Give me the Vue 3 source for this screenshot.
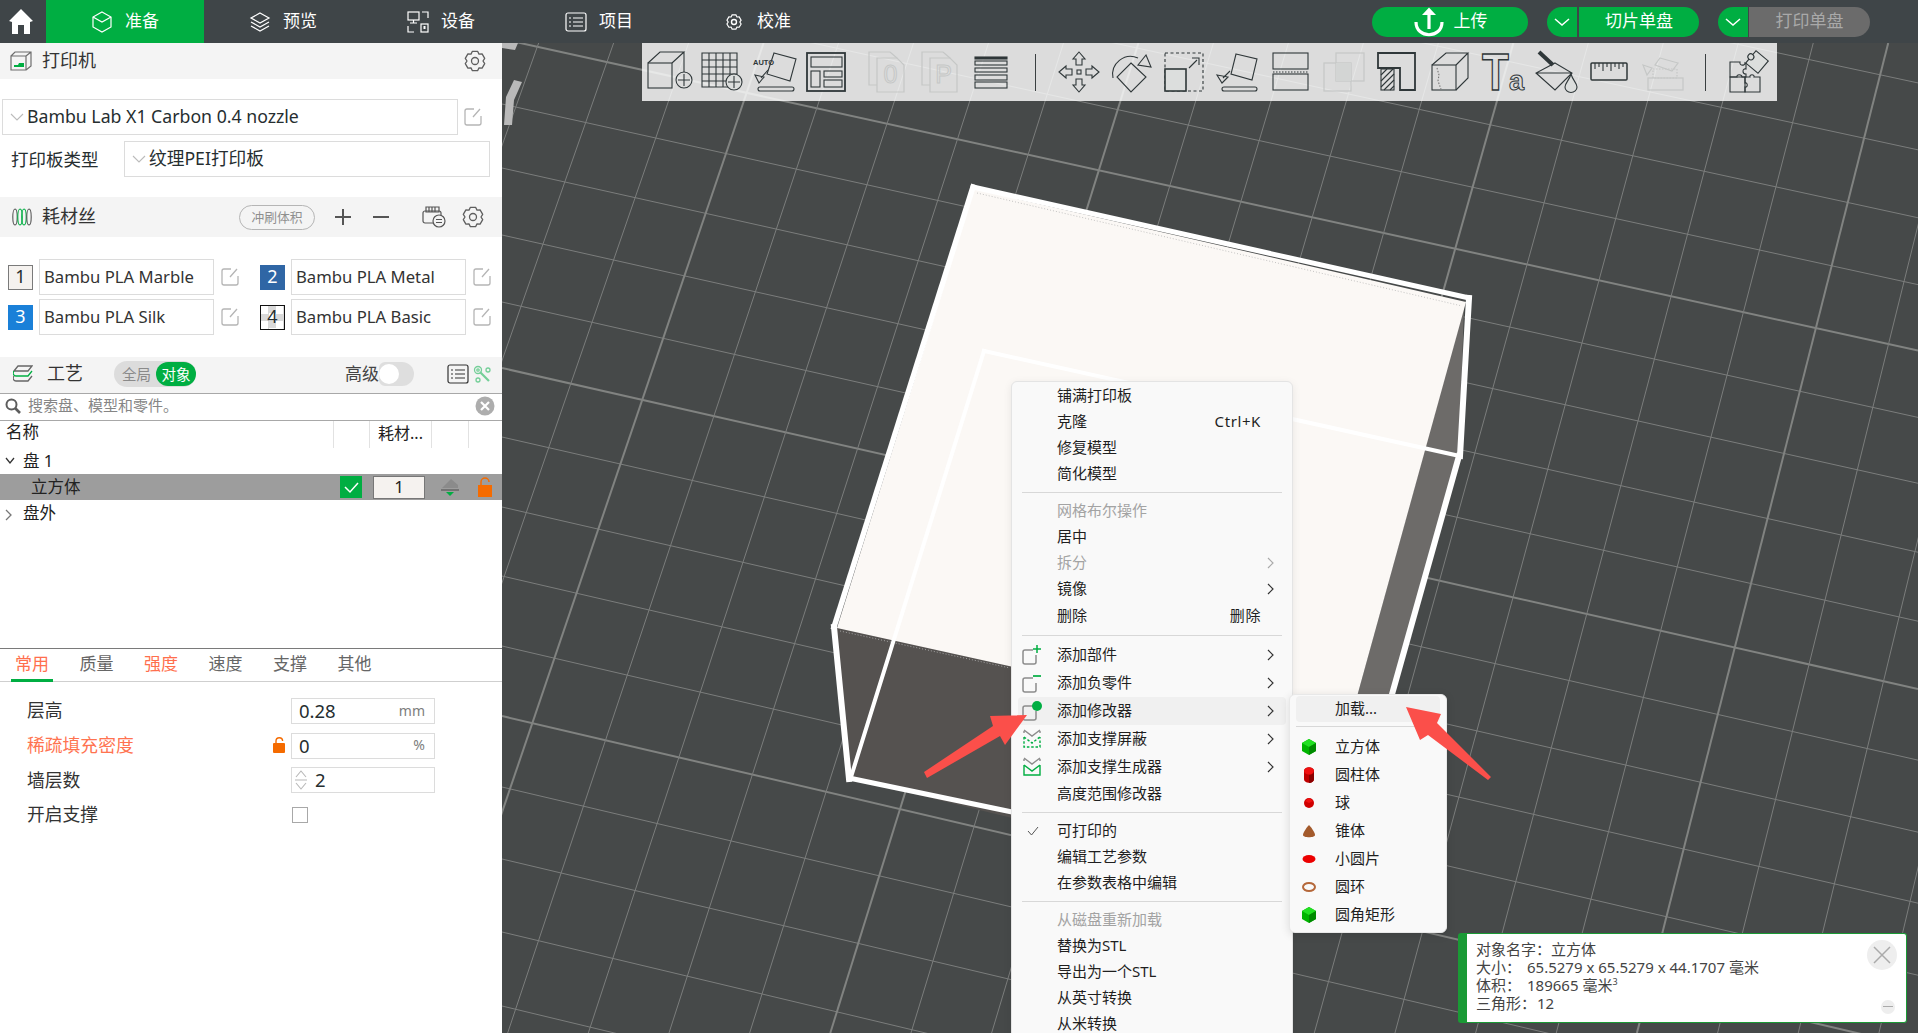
<script setup>
import { computed } from "vue"

const mainTabs = [
  { name: "准备", icon: "cube", active: true },
  { name: "预览", icon: "layers" },
  { name: "设备", icon: "device" },
  { name: "项目", icon: "list" },
  { name: "校准", icon: "gear" }
]

const filaments = [
  { no: 1, name: "Bambu PLA Marble", cls: "sw-marble" },
  { no: 2, name: "Bambu PLA Metal", cls: "sw-metal" },
  { no: 3, name: "Bambu PLA Silk", cls: "sw-silk" },
  { no: 4, name: "Bambu PLA Basic", cls: "sw-basic" }
]

const paramTabs = [
  { name: "常用", on: true, warn: true },
  { name: "质量" },
  { name: "强度", warn: true },
  { name: "速度" },
  { name: "支撑" },
  { name: "其他" }
]

const menu = [
  { t: "铺满打印板" },
  { t: "克隆", key: "Ctrl+K" },
  { t: "修复模型" },
  { t: "简化模型" },
  { sep: true },
  { t: "网格布尔操作", off: true },
  { t: "居中" },
  { t: "拆分", off: true, arrow: true },
  { t: "镜像", arrow: true },
  { t: "删除", key: "删除", tall: true },
  { sep: true },
  { t: "添加部件", arrow: true, tall: true, icon: "plus" },
  { t: "添加负零件", arrow: true, tall: true, icon: "minus" },
  { t: "添加修改器", arrow: true, tall: true, icon: "dot", hover: true },
  { t: "添加支撑屏蔽", arrow: true, tall: true, icon: "block" },
  { t: "添加支撑生成器", arrow: true, tall: true, icon: "enforce" },
  { t: "高度范围修改器" },
  { sep: true },
  { t: "可打印的", icon: "check" },
  { t: "编辑工艺参数" },
  { t: "在参数表格中编辑" },
  { sep: true },
  { t: "从磁盘重新加载", off: true },
  { t: "替换为STL" },
  { t: "导出为一个STL" },
  { t: "从英寸转换" },
  { t: "从米转换" }
]

const shapes = [
  { t: "立方体", top: "#22e022", a: "#00b400", b: "#008a00", kind: "hex" },
  { t: "圆柱体", top: "#f01010", a: "#c00000", b: "#8a0000", kind: "cyl" },
  { t: "球", top: "#f01010", a: "#d00000", b: "#a00000", kind: "ball" },
  { t: "锥体", kind: "cone" },
  { t: "小圆片", kind: "disc" },
  { t: "圆环", kind: "ring" },
  { t: "圆角矩形", top: "#22e022", a: "#00b400", b: "#008a00", kind: "hex" }
]

// 平台网格：两组带一点透视的线
const hLines = computed(() =>
  [-286, -221, -156, -90, -25, 39, 104, 168, 235, 302, 368, 437, 507, 576, 646, 716, 787, 859, 932, 1006, 1082].map((y0, i) => {
    const s = 0.22 + 0.0000206 * (y0 - 39)
    return { x1: 502, y1: y0, x2: 1918, y2: y0 + s * 1416, major: i % 5 === 0 }
  })
)

const vLines = computed(() => {
  const out = []
  for (let n = -3; n <= 20; n++) {
    const x = 632 + 77.2 * n
    const s = -0.34 + 0.0000744 * (x - 632)
    out.push({ x1: x + s * (43 - 430), y1: 43, x2: x + s * (1033 - 430), y2: 1033, major: n % 5 === 0 })
  }
  return out
})

function gear(c, R, r) {
  let d = ""
  for (let i = 0; i < 6; i++) {
    const a = (i * 60 - 90) * Math.PI / 180
    const p = [[-0.26, R], [0.26, R], [0.52, r]]
    p.forEach(([o, l], j) => {
      const x = (c + Math.cos(a + o) * l).toFixed(1)
      const y = (c + Math.sin(a + o) * l).toFixed(1)
      d += (i === 0 && j === 0 ? "M" : "L") + x + " " + y
    })
  }
  return d + "Z"
}
const gearPath = gear(11, 10, 8)
</script>

<template>
  <div class="app">
    <header class="topbar">
      <svg class="home" viewBox="0 0 24 25" width="24" height="25">
        <path d="M12 0 L24 12 L21 13 V25 H15 V16 H9 V25 H3 V13 L0 12 Z" fill="#fff" />
      </svg>
      <nav class="tabs">
        <div v-for="tab in mainTabs" :key="tab.name" class="tab" :class="{ active: tab.active }">
          <svg viewBox="0 0 22 22" width="22" height="22" fill="none" stroke="#fff" stroke-width="1.2">
            <g v-if="tab.icon === 'cube'">
              <path d="M11 1 L20 6 V16 L11 21 L2 16 V6 Z" />
              <path d="M2 6 L11 11 L20 6" />
            </g>
            <g v-else-if="tab.icon === 'layers'">
              <path d="M11 2 L20 7 L11 12 L2 7 Z" />
              <path d="M2 11 L11 16 L20 11" />
              <path d="M2 15 L11 20 L20 15" />
            </g>
            <g v-else-if="tab.icon === 'device'">
              <rect x="1" y="1" width="11" height="8" />
              <path d="M6.500 9 V12 M3 12 H10" />
              <path d="M15 1 H21 V7 M1 15 V21 H7" />
              <rect x="14" y="13" width="7" height="8" />
              <rect x="16.500" y="15" width="2" height="3" fill="#fff" stroke="none" />
            </g>
            <g v-else-if="tab.icon === 'list'">
              <rect x="1" y="2" width="20" height="18" rx="2" />
              <path d="M4 7 H6 M8 7 H18 M4 11 H6 M8 11 H18 M4 15 H6 M8 15 H18" />
            </g>
            <g v-else>
              <path :d="gearPath" stroke-width="1.600" transform="translate(3 3) scale(0.73)" />
              <circle cx="11" cy="11" r="2.500" stroke-width="1.400" />
            </g>
          </svg>
          <span>{{ tab.name }}</span>
        </div>
      </nav>
      <div class="actions">
        <button class="btn upload">
          <svg viewBox="0 0 32 30" width="32" height="30" fill="none" stroke="#fff" stroke-width="3.200">
            <path d="M16 22 V4" />
            <path d="M16 0.500 L23 8 H9 Z" fill="#fff" stroke="none" />
            <path d="M3 15 C3 32 29 32 29 15" />
          </svg>
          <span>上传</span>
        </button>
        <div class="split">
          <button class="drop"><svg viewBox="0 0 16 10" width="16" height="10"><path d="M1 2 L8 8 L15 2" fill="none" stroke="#fff" stroke-width="1.500" /></svg></button>
          <button class="main-btn">切片单盘</button>
        </div>
        <div class="split print">
          <button class="drop"><svg viewBox="0 0 16 10" width="16" height="10"><path d="M1 2 L8 8 L15 2" fill="none" stroke="#fff" stroke-width="1.500" /></svg></button>
          <button class="main-btn">打印单盘</button>
        </div>
      </div>
    </header>

    <div class="body">
      <aside class="panel">
        <div class="sec sec-printer">
          <svg class="sec-ic" viewBox="0 0 22 20" width="22" height="20" fill="none" stroke="#6d6d6d" stroke-width="1.200">
            <path d="M1 5 H16 V19 H1 Z M1 5 L5 1 H21 V15 L16 19 M16 5 L21 1" />
            <path d="M4 16 H14 V12 H9 L8 14 H4 Z" fill="#00ae42" stroke="none" />
          </svg>
          <span class="sec-title">打印机</span>
          <svg class="gear" viewBox="0 0 22 22" width="22" height="22" fill="none" stroke="#5e5e5e" stroke-width="1.300" stroke-linejoin="round">
            <path :d="gearPath" /><circle cx="11" cy="11" r="3.500" />
          </svg>
        </div>

        <div class="printer-row">
          <div class="combo combo-printer">
            <svg class="chev" viewBox="0 0 14 8" width="14" height="8"><path d="M1 1 L7 7 L13 1" fill="none" stroke="#bbb" stroke-width="1.100" /></svg>
            <span>Bambu Lab X1 Carbon 0.4 nozzle</span>
          </div>
          <svg class="edit" viewBox="0 0 18 18" width="18" height="18" fill="none" stroke="#b5b5b5" stroke-width="1.300">
            <path d="M10 1 H3 a2 2 0 0 0 -2 2 V15 a2 2 0 0 0 2 2 H15 a2 2 0 0 0 2 -2 V8 M9 9 L16 1" />
          </svg>
        </div>
        <div class="plate-row">
          <label>打印板类型</label>
          <div class="combo combo-plate">
            <svg class="chev" viewBox="0 0 14 8" width="14" height="8"><path d="M1 1 L7 7 L13 1" fill="none" stroke="#bbb" stroke-width="1.100" /></svg>
            <span>纹理PEI打印板</span>
          </div>
        </div>

        <div class="sec sec-fil">
          <svg class="sec-ic" viewBox="0 0 20 18" width="20" height="18" fill="none" stroke-width="1.100">
            <ellipse cx="3" cy="9" rx="2.200" ry="8" stroke="#555" />
            <ellipse cx="8" cy="9" rx="2.200" ry="8" stroke="#00ae42" />
            <ellipse cx="12" cy="9" rx="2.200" ry="8" stroke="#00ae42" />
            <ellipse cx="17" cy="9" rx="2.200" ry="8" stroke="#555" />
          </svg>
          <span class="sec-title">耗材丝</span>
          <span class="flush">冲刷体积</span>
          <span class="sym plus"></span>
          <span class="sym minus"></span>
          <svg class="ams" viewBox="0 0 24 22" width="24" height="22" fill="none" stroke="#555" stroke-width="1.200">
            <rect x="1" y="5" width="18" height="12" rx="2" />
            <path d="M4 1 H17 V6 H4 Z M7 1 V6 M10 1 V6 M13 1 V6" />
            <circle cx="17" cy="15" r="6" fill="#f3f3f3" />
            <path d="M14 13.500 H20 M14 16.500 H20" />
          </svg>
          <svg class="gear gear-2" viewBox="0 0 22 22" width="22" height="22" fill="none" stroke="#5e5e5e" stroke-width="1.300" stroke-linejoin="round">
            <path :d="gearPath" /><circle cx="11" cy="11" r="3.500" />
          </svg>
        </div>

        <div class="fil-grid">
          <div v-for="f in filaments" :key="f.no" class="fil">
            <span class="swatch" :class="f.cls">{{ f.no }}</span>
            <div class="fil-name">{{ f.name }}</div>
            <svg class="fil-edit" viewBox="0 0 18 18" width="18" height="18" fill="none" stroke="#b5b5b5" stroke-width="1.300">
              <path d="M10 1 H3 a2 2 0 0 0 -2 2 V15 a2 2 0 0 0 2 2 H15 a2 2 0 0 0 2 -2 V8 M9 9 L16 1" />
            </svg>
          </div>
        </div>

        <div class="sec sec-proc">
          <svg class="sec-ic" viewBox="0 0 20 18" width="20" height="18" fill="none" stroke-width="1.300">
            <path d="M1 6 L5 1 H19 L15 6 H1 Z" stroke="#666" />
            <path d="M1 6 C-1 9 1 11 3 11 H15 L19 6" stroke="#00ae42" />
            <path d="M1 11 C-1 14 1 16 3 16 H15 L19 11" stroke="#666" />
          </svg>
          <span class="sec-title">工艺</span>
          <div class="scope">
            <span class="scope-a">全局</span>
            <span class="scope-b">对象</span>
          </div>
          <span class="adv">高级</span>
          <div class="switch"><i></i></div>
          <svg class="list-ic" viewBox="0 0 22 20" width="22" height="20" fill="none" stroke="#333" stroke-width="1.200">
            <rect x="1" y="1" width="20" height="18" rx="2" />
            <path d="M4 6 H6 M8 6 H18 M4 10 H6 M8 10 H18 M4 14 H6 M8 14 H18" />
          </svg>
          <svg class="tool-ic" viewBox="0 0 18 18" width="18" height="18" fill="none" stroke="#74cf98" stroke-width="1.300">
            <circle cx="5" cy="5" r="3.500" /><circle cx="5" cy="5" r="1.200" />
            <circle cx="15" cy="5" r="2" /><circle cx="5" cy="15" r="2" />
            <path d="M7 7 L16 16" stroke-width="2.200" />
          </svg>
        </div>

        <div class="search">
          <svg viewBox="0 0 16 16" width="16" height="16" fill="none" stroke="#5d5d5d" stroke-width="2">
            <circle cx="6.500" cy="6.500" r="5" /><path d="M10 10 L15 15" stroke-width="2.600" />
          </svg>
          <span class="ph">搜索盘、模型和零件。</span>
          <svg class="clear" viewBox="0 0 20 20" width="20" height="20">
            <circle cx="10" cy="10" r="9.500" fill="#adadad" />
            <path d="M6 6 L14 14 M14 6 L6 14" stroke="#fff" stroke-width="2.200" />
          </svg>
        </div>

        <div class="tree">
          <div class="thead">
            <span class="th-name">名称</span>
            <span class="th th-a"></span>
            <span class="th th-b">耗材...</span>
            <span class="th th-c"></span>
            <span class="th th-d"></span>
          </div>
          <div class="node">
            <svg class="twist" viewBox="0 0 10 8" width="10" height="8"><path d="M1 1 L5 6 L9 1" fill="none" stroke="#333" stroke-width="1.300" /></svg>
            <span>盘 1</span>
          </div>
          <div class="node leaf">
            <span class="leaf-name">立方体</span>
            <span class="ok"><svg viewBox="0 0 22 22" width="22" height="22"><path d="M5 11 L10 16 L18 7" fill="none" stroke="#fff" stroke-width="1.500" /></svg></span>
            <span class="count">1</span>
            <svg class="support" viewBox="0 0 20 20" width="20" height="20">
              <path d="M2 11 L11 2 L18 8 V11 Z" fill="#8b8b8b" />
              <rect x="1" y="12" width="18" height="2" fill="#737373" />
              <path d="M6 15 H14 L10 19 Z" fill="#00ae42" />
            </svg>
            <svg class="lock-ic" viewBox="0 0 14 20" width="14" height="20">
              <path d="M3 9 V5 a4 4 0 0 1 8 0" fill="none" stroke="#f56b00" stroke-width="1.500" />
              <rect y="8" width="14" height="12" fill="#f56b00" />
            </svg>
          </div>
          <div class="node">
            <svg class="twist" viewBox="0 0 8 12" width="8" height="12"><path d="M1 1 L6 6 L1 11" fill="none" stroke="#777" stroke-width="1.300" /></svg>
            <span>盘外</span>
          </div>
        </div>

        <div class="ptabs">
          <span v-for="p in paramTabs" :key="p.name" class="ptab" :class="{ on: p.on, warn: p.warn }">{{ p.name }}</span>
        </div>

        <div class="params">
          <div class="param">
            <span class="plabel">层高</span>
            <div class="pinput"><span>0.28</span><em>mm</em></div>
          </div>
          <div class="param">
            <span class="plabel warn">稀疏填充密度</span>
            <svg class="plock" viewBox="0 0 13 16" width="13" height="16">
              <path d="M3 7 V4 a3.300 3.300 0 0 1 6.600 0" fill="none" stroke="#f56b00" stroke-width="1.400" />
              <rect y="6" width="12" height="10" rx="1" fill="#f56b00" />
            </svg>
            <div class="pinput"><span>0</span><em>%</em></div>
          </div>
          <div class="param">
            <span class="plabel">墙层数</span>
            <div class="pinput spin">
              <svg viewBox="0 0 12 24" width="12" height="24" fill="none" stroke="#b8b8b8" stroke-width="1.100">
                <path d="M1 9 L6 3 L11 9 M1 15 L6 21 L11 15 M0 12 H12" />
              </svg>
              <span>2</span>
            </div>
          </div>
          <div class="param">
            <span class="plabel">开启支撑</span>
            <span class="pcheck"></span>
          </div>
        </div>
      </aside>

      <main class="view">
        <svg class="scene" viewBox="502 43 1416 990" width="1416" height="990">
          <line v-for="(l, i) in hLines" :key="'h' + i" v-bind="{ x1: l.x1, y1: l.y1, x2: l.x2, y2: l.y2 }" :stroke="l.major ? '#818381' : '#7b7d7c'" :stroke-width="l.major ? 2 : 1" />
          <line v-for="(l, i) in vLines" :key="'v' + i" v-bind="{ x1: l.x1, y1: l.y1, x2: l.x2, y2: l.y2 }" :stroke="l.major ? '#818381' : '#7b7d7c'" :stroke-width="l.major ? 2 : 1" />
          <path d="M502 43 H518 L515 50 L502 48 Z M514 80 L522 82 L514 100 L512 125 L504 125 L506 97 Z" fill="#b9b9b9" />

          <polygon points="836,627 849,778 1335,897 1345,740" fill="#555250" />
          <polygon points="1464,307 1459,455 1335,897 1345,740" fill="#6d6b69" />
          <polygon points="974,189 1466,302 1345,740 837,628" fill="#fbf8f5" />
          <path d="M977 193 L1462 306 M840 631 L1010 668" stroke="#b5b5b5" stroke-width="0.800" stroke-dasharray="1 2" fill="none" />
          <g stroke="#fff" fill="none" stroke-linecap="square">
            <path d="M973 187 L1469 298" stroke-width="5" />
            <path d="M973 187 L834 627" stroke-width="5.500" />
            <path d="M1469 298 L1460 456" stroke-width="6" />
            <path d="M834 627 L849 779" stroke-width="6" />
            <path d="M849 778 L1012 812" stroke-width="5" />
            <path d="M984 351 L851 777" stroke-width="4" />
            <path d="M984 351 L1460 456" stroke-width="4" />
            <path d="M1459 456 L1335 897" stroke-width="6" />
          </g>
        </svg>

        <div class="toolbar">
          <svg class="tb" viewBox="0 0 48 42">
            <rect x="3" y="12" width="24" height="25" />
            <path d="M3 12 L15 1 H39 L27 12 M39 1 V21" />
            <circle cx="39" cy="29" r="8" />
            <path d="M33 29 H45 M39 23 V35" />
          </svg>
          <svg class="tb" viewBox="0 0 48 42">
            <path d="M4 2 H39 V36 H4 Z M4 9 H39 M4 16 H39 M4 23 H39 M4 30 H39 M11 2 V36 M18 2 V36 M25 2 V36 M32 2 V36" />
            <circle cx="36" cy="31" r="8" fill="#dcdedd" />
            <path d="M30 31 H42 M36 25 V37" />
          </svg>
          <svg class="tb" viewBox="0 0 48 42">
            <path d="M23 2 L45 8 L39 30 L16 23 Z" />
            <path d="M4 24 L13 26 L8 32 Z M10 27 L17 19" />
            <rect x="7" y="36" width="36" height="4" rx="2" />
            <text x="2" y="14" class="auto">AUTO</text>
          </svg>
          <svg class="tb" viewBox="0 0 48 42">
            <rect x="3" y="2" width="38" height="38" stroke-width="1.800" />
            <rect x="7" y="6" width="31" height="10" />
            <rect x="7" y="20" width="9" height="16" />
            <rect x="20" y="20" width="18" height="6" />
            <rect x="20" y="29" width="18" height="7" />
          </svg>
          <svg class="tb faint gap-l" viewBox="0 0 48 42">
            <path d="M14 34 H6 V1 H27 L34 7 V7" />
            <path d="M14 7 H34 L41 14 V41 H14 Z" />
            <text x="27.500" y="32" class="doc">0</text>
          </svg>
          <svg class="tb faint" viewBox="0 0 48 42">
            <path d="M14 34 H6 V1 H27 L34 7 V7" />
            <path d="M14 7 H34 L41 14 V41 H14 Z" />
            <text x="27.500" y="32" class="doc">P</text>
          </svg>
          <svg class="tb" viewBox="0 0 48 42">
            <rect x="6" y="6" width="32" height="2" fill="#2f3739" />
            <rect x="6" y="10" width="32" height="4" />
            <rect x="6" y="17" width="32" height="4" />
            <rect x="6" y="24" width="32" height="5" />
            <rect x="6" y="31" width="32" height="6" />
          </svg>
          <i class="tb-sep sep-a"></i>
          <svg class="tb after-sep-a" viewBox="0 0 48 42">
            <rect x="22" y="19" width="4" height="4" />
            <path d="M24 1 L30 8 H27 V14 H21 V8 H18 Z" />
            <path d="M24 1 L30 8 H27 V14 H21 V8 H18 Z" transform="rotate(90 24 21)" />
            <path d="M24 1 L30 8 H27 V14 H21 V8 H18 Z" transform="rotate(180 24 21)" />
            <path d="M24 1 L30 8 H27 V14 H21 V8 H18 Z" transform="rotate(270 24 21)" />
          </svg>
          <svg class="tb" viewBox="0 0 48 42">
            <path d="M23 12 L38 26 L23 41 L9 26 Z" />
            <path d="M5 27 A18 18 0 0 1 30 7" />
            <path d="M38 4 L43 16 L30 14 Z" />
          </svg>
          <svg class="tb" viewBox="0 0 48 42">
            <rect x="4" y="2" width="38" height="38" stroke-dasharray="3 2.500" />
            <rect x="4" y="18" width="21" height="22" fill="#dcdedd" stroke-width="1.600" />
            <path d="M28 17 L36 9 M31 7 H38 V14" />
          </svg>
          <svg class="tb" viewBox="0 0 48 42">
            <path d="M22 3 L43 8 L38 29 L17 23 Z" />
            <path d="M3 24 L14 26 L8 32 Z M9 27 L16 20" />
            <rect x="8" y="36" width="35" height="4" rx="2" />
          </svg>
          <svg class="tb" viewBox="0 0 48 42">
            <rect x="6" y="2" width="35" height="16" />
            <path d="M6 21 H41" stroke-dasharray="1.500 1.500" />
            <rect x="6" y="23" width="35" height="16" />
          </svg>
          <svg class="tb faint" viewBox="0 0 48 42">
            <rect x="16" y="2" width="28" height="28" />
            <rect x="4" y="12" width="27" height="28" />
            <rect x="16" y="12" width="15" height="18" fill="#d3d5d4" stroke="none" />
          </svg>
          <svg class="tb" viewBox="0 0 48 42">
            <path d="M5 2 H42 V39 H27 V17 H5 Z" stroke-width="1.800" />
            <rect x="8" y="18" width="13" height="21" />
            <path d="M8 24 L14 18 M8 30 L20 18 M8 36 L21 23 M11 39 L21 29 M17 39 L21 35" />
          </svg>
          <svg class="tb" viewBox="0 0 48 42">
            <rect x="6" y="14" width="24" height="25" />
            <path d="M6 14 L20 2 H42 L30 14 M42 2 V27 L30 39" />
            <path d="M11 17 L13 24 L12 30 L15 38" stroke="#777" stroke-dasharray="1.500 1.500" />
          </svg>
          <svg class="tb" viewBox="0 0 48 42">
            <text class="big-t" transform="translate(3 39) scale(1 1.180)">T</text>
            <text x="30" y="39" class="small-a">a</text>
          </svg>
          <svg class="tb" viewBox="0 0 48 42">
            <path d="M23 12 L40 22 L23 39 L4 22 Z M4 22 H40" />
            <path d="M7 1 L21 14" stroke-width="4" />
            <path d="M39 23 C37 30 33 32 33 36 A6 5.500 0 0 0 45 36 C45 32 41 30 39 23 Z" fill="#dcdedd" />
          </svg>
          <svg class="tb" viewBox="0 0 48 42">
            <rect x="6" y="12" width="36" height="17" rx="1" stroke-width="1.500" />
            <path d="M10 12 V18 M14 12 V16 M18 12 V20 M22 12 V16 M26 12 V20 M30 12 V16 M34 12 V18 M38 12 V16" />
          </svg>
          <svg class="tb faint" viewBox="0 0 48 42">
            <path d="M22 7 L40 12 L34 20 L17 14 Z" />
            <path d="M5 14 L14 17 L9 24 Z" />
            <rect x="15" y="18" width="24" height="9" stroke-dasharray="1.500 1.500" />
            <rect x="10" y="27" width="35" height="12" />
          </svg>
          <i class="tb-sep sep-b"></i>
          <svg class="tb after-sep-b" viewBox="0 0 48 42">
            <path d="M6 11 H16 C15 15 21 15 21 12 L22 13 V18 C18 17 18 23 22 23 V26 H6 Z" />
            <path d="M6 26 H13 C12 23 18 23 18 26 H21 V41 H6 Z" />
            <path d="M21 26 H26 C25 23 31 23 30 26 H36 V41 H21 V36 C24 37 24 31 21 32 Z" />
            <g transform="rotate(40 33 11)">
              <rect x="25" y="3" width="16" height="16" fill="#dcdedd" />
              <circle cx="25" cy="11" r="3" fill="#dcdedd" />
            </g>
          </svg>
        </div>

        <div class="ctx">
          <template v-for="(m, i) in menu" :key="i">
            <div v-if="m.sep" class="ctx-sep"><i></i></div>
            <div v-else class="ctx-row" :class="{ tall: m.tall, off: m.off, hover: m.hover }">
              <span class="ctx-ic">
                <svg v-if="m.icon === 'plus' || m.icon === 'minus' || m.icon === 'dot'" viewBox="0 0 20 20" width="20" height="20" fill="none" stroke="#8c8c8c" stroke-width="1.500">
                  <path d="M11 5 H3 a2 2 0 0 0 -2 2 V17 a2 2 0 0 0 2 2 H12 a2 2 0 0 0 2 -2 V10" />
                  <path v-if="m.icon === 'plus'" d="M15 0 V8 M11 4 H19" stroke="#00ae42" />
                  <path v-if="m.icon === 'minus'" d="M11 3 H19" stroke="#00ae42" stroke-width="1.700" />
                  <circle v-if="m.icon === 'dot'" cx="15" cy="5" r="5" fill="#00ae42" stroke="none" />
                </svg>
                <svg v-else-if="m.icon === 'block' || m.icon === 'enforce'" viewBox="0 0 20 20" width="20" height="20" fill="none" stroke-width="1.400">
                  <path d="M2 1 L10 7 L18 1 M2 4 L2 2 M18 4 L18 2" stroke="#8c8c8c" />
                  <path v-if="m.icon === 'block'" d="M2 8 L10 14 L18 8 M2 8 V18 H18 V8" stroke="#00ae42" stroke-dasharray="2.500 1.800" />
                  <path v-else d="M2 8 L10 14 L18 8 M2 8 V18 H18 V8" stroke="#00ae42" />
                </svg>
                <svg v-else-if="m.icon === 'check'" class="ctx-check" viewBox="0 0 12 10" width="12" height="10">
                  <path d="M1 5 L4.500 9 L11 1" fill="none" stroke="#555" stroke-width="1" />
                </svg>
              </span>
              <span class="ctx-text">{{ m.t }}</span>
              <span v-if="m.key" class="ctx-key">{{ m.key }}</span>
              <svg v-if="m.arrow" class="ctx-arrow" viewBox="0 0 7 12" width="7" height="12">
                <path d="M1 1 L6 6 L1 11" fill="none" :stroke="m.off ? '#aaa' : '#333'" stroke-width="1.200" />
              </svg>
            </div>
          </template>
        </div>

        <div class="sub">
          <div class="sub-load">加载...</div>
          <div class="sub-sep"></div>
          <div v-for="s in shapes" :key="s.t" class="sub-row">
            <svg viewBox="0 0 16 16" width="16" height="16">
              <g v-if="s.kind === 'hex'">
                <path d="M8 0 L15 4 V12 L8 16 L1 12 V4 Z" :fill="s.a" />
                <path d="M8 0 L15 4 L8 8 L1 4 Z" :fill="s.top" />
                <path d="M8 8 L15 4 V12 L8 16 Z" :fill="s.b" />
              </g>
              <g v-else-if="s.kind === 'cyl'">
                <path d="M3 4 C3 -1 13 -1 13 4 V12 C13 17 3 17 3 12 Z" :fill="s.a" />
                <ellipse cx="8" cy="4" rx="5" ry="3.500" :fill="s.top" />
                <path d="M8 8 C11 8 13 6 13 4 V12 C13 14 11 16 8 16 Z" :fill="s.b" />
              </g>
              <g v-else-if="s.kind === 'ball'">
                <circle cx="8" cy="8" r="5" fill="#d00000" />
                <path d="M4 6 L8 3 L12 6 L8 8 Z" fill="#f01010" />
              </g>
              <path v-else-if="s.kind === 'cone'" d="M8 2 C11 5 14 10 14 12 C14 15 2 15 2 12 C2 10 5 5 8 2 Z" fill="#a35a2c" />
              <ellipse v-else-if="s.kind === 'disc'" cx="8" cy="8" rx="6.500" ry="4" fill="#ec0000" />
              <ellipse v-else cx="8" cy="8" rx="6" ry="4" fill="none" stroke="#b5683a" stroke-width="2" />
            </svg>
            <span>{{ s.t }}</span>
          </div>
        </div>

        <svg class="marks" viewBox="502 43 1416 990" width="1416" height="990">
          <polygon points="1027,715 990,716 993,726 924,772 927,778 1000,736 1005,745" fill="#fb4f4a" />
          <polygon points="1406,707 1441,714 1437,723 1491,777 1488,780 1428,735 1420,740" fill="#fb4f4a" />
        </svg>

        <div class="info">
          <div class="info-text">
            <p>对象名字：<span class="v1">立方体</span></p>
            <p>大小：<span class="v2">65.5279 x 65.5279 x 44.1707 毫米</span></p>
            <p>体积：<span class="v2">189665 毫米<sup>3</sup></span></p>
            <p>三角形：<span class="v3">12</span></p>
          </div>
          <span class="info-close">
            <svg viewBox="0 0 20 20" width="20" height="20"><path d="M2 2 L18 18 M18 2 L2 18" stroke="#aaa" stroke-width="1.500" /></svg>
          </span>
          <span class="info-min"></span>
        </div>
      </main>
    </div>
  </div>
</template>

<style scoped>
.app{
  width:1918px;
  height:1033px;
  display:flex;
  flex-direction:column;
  overflow:hidden;
  font-family:"Noto Sans","Noto Sans CJK SC",sans-serif;
  line-height:1.3;
  color:#262e30;
}

button{
  font-family:inherit;
  line-height:inherit;
  border:none;
  padding:0;
}

.topbar{
  height:43px;
  flex:none;
  background:#3f4548;
  display:flex;
  align-items:center;
}

.home{
  margin-left:9px;
  margin-right:13px;
  flex:none;
}

.tabs{
  display:flex;
  height:100%;
}

.tab{
  width:158px;
  display:flex;
  align-items:center;
  justify-content:center;
  gap:12px;
  color:#fff;
  font-size:17px;
}

.tab.active{
  background:#00ae42;
}

.actions{
  margin-left:auto;
  margin-right:48px;
  display:flex;
  align-items:center;
  gap:19px;
}

.btn.upload{
  width:156px;
  height:30px;
  border-radius:15px;
  background:#00ae42;
  color:#fff;
  font-size:17px;
  display:flex;
  align-items:center;
  justify-content:center;
  gap:9px;
}

.split{
  display:flex;
  height:30px;
  border-radius:15px;
  overflow:hidden;
  gap:2px;
}

.drop{
  width:30px;
  background:#00ae42;
  display:flex;
  align-items:center;
  justify-content:center;
}

.main-btn{
  width:120px;
  background:#00ae42;
  color:#fff;
  font-size:17px;
}

.split.print{
  gap:1px;
}

.print .main-btn{
  width:121px;
  background:#6b6b6b;
  color:#a9a9a9;
}

.body{
  flex:1;
  display:flex;
  min-height:0;
}

.panel{
  width:502px;
  flex:none;
  background:#fff;
  display:flex;
  flex-direction:column;
}

.sec{
  background:#f4f4f4;
  display:flex;
  align-items:center;
  flex:none;
}

.sec-printer{
  height:36px;
  padding-left:10px;
  padding-bottom:1px;
  box-sizing:border-box;
}

.sec-fil{
  height:40px;
  margin-top:20px;
  padding-left:12px;
}

.sec-proc{
  height:34px;
  padding-bottom:2px;
  margin-top:22px;
  padding-left:13px;
  border-bottom:1px solid #a8a8a8;
  box-sizing:content-box;
}

.sec-title{
  flex:none;
  white-space:nowrap;
  font-size:18px;
  margin-left:10px;
  color:#333;
}

.sec-proc .sec-title{
  margin-left:14px;
}

.gear{
  margin-left:auto;
  margin-right:16px;
}

.gear-2{
  margin-left:16px;
  margin-right:0;
  flex:none;
}

.printer-row{
  display:flex;
  align-items:center;
  margin-top:20px;
  padding-left:2px;
  height:36px;
}

.combo{
  height:36px;
  box-sizing:border-box;
  border:1px solid #dcdcdc;
  display:flex;
  align-items:center;
  font-size:17.700px;
  color:#262e30;
  padding-bottom:1px;
}

.combo .chev{
  margin:0 3px 0 7px;
  flex:none;
}

.combo-printer{
  width:456px;
}

.edit{
  margin-left:6px;
}

.plate-row{
  display:flex;
  align-items:center;
  margin-top:6px;
  height:36px;
  padding-left:11px;
}

.plate-row label{
  width:113px;
  font-size:17.500px;
  color:#262e30;
}

.combo-plate{
  width:366px;
}

.fil-grid{
  display:grid;
  grid-template-columns:252px 242px;
  row-gap:4px;
  padding:22px 0 0 8px;
}

.fil{
  display:flex;
  align-items:center;
  height:36px;
}

.swatch{
  width:25px;
  height:25px;
  box-sizing:border-box;
  flex:none;
  display:flex;
  align-items:center;
  justify-content:center;
  font-size:18px;
}

.sw-marble{
  background:#f5f2ef;
  border:1px solid #7a7a7a;
}

.sw-metal{
  background:#2f66a5;
  color:#fff;
}

.sw-silk{
  background:#1a80d8;
  color:#fff;
}

.sw-basic{
  background:repeating-conic-gradient(#d9d9d9 0 25%,#fff 0 50%) 0 0/15px 15px;
  border:1px solid #111;
}

.fil-name{
  width:175px;
  height:36px;
  box-sizing:border-box;
  margin-left:6px;
  border:1px solid #dcdcdc;
  padding-left:4px;
  display:flex;
  align-items:center;
  font-size:16.700px;
  color:#333;
}

.fil-edit{
  margin-left:7px;
}

.flush{
  margin-left:143px;
  flex:none;
  width:76px;
  height:25px;
  box-sizing:border-box;
  border:1px solid #b5b5b5;
  border-radius:13px;
  font-size:12.800px;
  color:#8f8f8f;
  display:flex;
  align-items:center;
  justify-content:center;
}

.sym{
  width:16px;
  height:16px;
  position:relative;
  display:block;
  flex:none;
}

.sym::before,.plus::after{
  content:"";
  position:absolute;
  background:#555;
}

.sym::before{
  left:0;
  top:7px;
  width:16px;
  height:2px;
}

.plus::after{
  left:7px;
  top:0;
  width:2px;
  height:16px;
}

.plus{
  margin-left:20px;
}

.minus{
  margin-left:22px;
}

.ams{
  margin-left:33px;
  flex:none;
}

.scope{
  margin-left:31px;
  width:82px;
  height:26px;
  border-radius:13px;
  background:#dcdcdc;
  display:flex;
  align-items:center;
  font-size:14.500px;
}

.scope-a{
  width:37px;
  text-align:right;
  color:#8a8a8a;
}

.scope-b{
  margin-left:5px;
  width:40px;
  height:24px;
  border-radius:12px;
  background:#00ae42;
  color:#fff;
  display:flex;
  align-items:center;
  justify-content:center;
}

.adv{
  margin-left:auto;
  font-size:17px;
  color:#444;
}

.switch{
  width:35px;
  height:24px;
  margin-right:33px;
  border-radius:6px 12px 12px 6px;
  background:#dedede;
  position:relative;
}

.switch i{
  position:absolute;
  left:0;
  top:2px;
  width:20px;
  height:20px;
  border-radius:50%;
  background:#fff;
}

.list-ic{
  flex:none;
}

.tool-ic{
  margin:0 11px 0 4px;
  flex:none;
}

.search{
  height:24px;
  padding-bottom:2px;
  flex:none;
  border-bottom:1px solid #a8a8a8;
  display:flex;
  align-items:center;
  padding-left:5px;
  font-size:15px;
}

.ph{
  margin-left:7px;
  color:#858585;
}

.clear{
  margin-left:auto;
  margin-right:7px;
}

.tree{
  height:227px;
  flex:none;
  border-bottom:1px solid #7a7a7a;
  font-size:16.500px;
  color:#222;
}

.thead{
  height:27px;
  display:flex;
  align-items:center;
}

.th-name{
  width:333px;
  height:25px;
  padding-left:6px;
  box-sizing:border-box;
  align-self:flex-start;
}

.th{
  height:27px;
  border-left:1px solid #e2e2e2;
  box-sizing:border-box;
  display:flex;
  align-items:center;
  justify-content:center;
}

.th-a{
  width:36px;
}

.th-b{
  width:62px;
  font-size:16px;
  padding-bottom:2px;
}

.th-c{
  width:37px;
}

.th-d{
  width:34px;
}

.node{
  height:26px;
  display:flex;
  align-items:center;
  padding-left:23px;
  position:relative;
}

.twist{
  position:absolute;
  left:5px;
  top:9px;
}

.leaf{
  background:#9d9d9d;
  padding-left:31px;
}

.leaf-name{
  width:309px;
}

.ok{
  width:22px;
  height:22px;
  background:#00ae42;
  display:block;
  flex:none;
}

.count{
  margin-left:11px;
  width:52px;
  height:23px;
  box-sizing:border-box;
  flex:none;
  background:#f5f2ef;
  border:1px solid #777;
  display:flex;
  align-items:center;
  justify-content:center;
  font-size:17px;
}

.support{
  margin-left:15px;
}

.lock-ic{
  margin-left:18px;
}

.ptabs{
  height:31px;
  padding-bottom:1px;
  flex:none;
  border-bottom:1px solid #cfcfcf;
  display:flex;
  padding-left:15px;
  gap:30.500px;
  font-size:17px;
  color:#666;
  align-items:center;
  box-sizing:content-box;
}

.ptab{
  position:relative;
}

.ptab.warn{
  color:#ff6f4d;
}

.ptab.on::after{
  content:"";
  position:absolute;
  left:-4px;
  right:-4px;
  bottom:-6px;
  height:3px;
  background:#00ae42;
}

.params{
  padding-top:11.500px;
}

.param{
  height:34.700px;
  display:flex;
  align-items:center;
  padding-left:27px;
  position:relative;
  font-size:17.800px;
  color:#333;
}

.plabel{
  width:264px;
}

.plabel.warn{
  color:#ff7350;
}

.plock{
  position:absolute;
  left:273px;
  top:9px;
}

.pinput{
  width:144px;
  height:26px;
  box-sizing:border-box;
  border:1px solid #dcdcdc;
  display:flex;
  align-items:center;
  justify-content:space-between;
  padding:0 9px 0 7px;
  font-size:18.500px;
  color:#262e30;
}

.pinput em{
  font-style:normal;
  font-size:14px;
  color:#7d7d7d;
}

.pinput.spin{
  justify-content:flex-start;
  padding-left:3px;
  gap:8px;
}

.pcheck{
  margin-left:1px;
  width:16px;
  height:16px;
  box-sizing:border-box;
  border:1px solid #a8a8a8;
  background:#fff;
}

.view{
  flex:1;
  position:relative;
  overflow:hidden;
  background:#464949;
}

.scene{
  display:block;
}

.marks{
  position:absolute;
  left:0;
  top:0;
  pointer-events:none;
}

.toolbar{
  position:absolute;
  left:140px;
  top:0;
  width:1135px;
  height:58px;
  box-sizing:border-box;
  background:rgba(255,255,255,0.81);
  display:flex;
  align-items:center;
  gap:5px;
  padding-left:3px;
}

.tb{
  width:48px;
  height:42px;
  flex:none;
  fill:none;
  stroke:#2f3739;
  stroke-width:1.100;
  overflow:visible;
}

.tb.faint{
  stroke:#c5c7c6;
  stroke-width:1.200;
}

.gap-l{
  margin-left:6px;
}

.tb-sep{
  width:1px;
  height:37px;
  background:#3a3f41;
  flex:none;
}

.sep-a{
  margin-left:13px;
}

.after-sep-a{
  margin-left:14px;
}

.sep-b{
  margin-left:14px;
}

.after-sep-b{
  margin-left:13px;
}

.auto{
  font-family:"Liberation Sans",sans-serif;
  font-size:7.500px;
  font-weight:700;
  fill:#2f3739;
  stroke:none;
}

.doc{
  font-family:"Liberation Sans",sans-serif;
  font-size:25px;
  text-anchor:middle;
  fill:none;
  stroke:#c5c7c6;
  stroke-width:1;
}

.big-t{
  font-family:"Liberation Sans",sans-serif;
  font-size:44px;
  font-weight:700;
  fill:none;
  stroke:#2f3739;
  stroke-width:1.200;
}

.small-a{
  font-family:"Liberation Sans",sans-serif;
  font-size:27px;
  font-weight:700;
  fill:none;
  stroke:#2f3739;
  stroke-width:1;
}

.ctx{
  position:absolute;
  left:509px;
  top:338px;
  width:282px;
  height:700px;
  box-sizing:border-box;
  padding:1px 6px 0;
  background:#f9f9f9;
  border:1px solid #e4e4e4;
  border-radius:6px;
  box-shadow:0 2px 8px rgba(0,0,0,0.08);
  font-size:15px;
  color:#1f1f1f;
}

.ctx-row{
  height:26px;
  display:flex;
  align-items:center;
  border-radius:4px;
  padding-right:13px;
}

.ctx-row.tall{
  height:28px;
}

.ctx-row.off{
  color:#a3a3a3;
}

.ctx-row.hover{
  background:#f0f0f0;
}

.ctx-ic{
  width:39px;
  padding-left:4px;
  box-sizing:border-box;
  flex:none;
  display:flex;
  align-items:center;
}

.ctx-check{
  margin-left:5px;
}

.ctx-key{
  margin-left:auto;
  margin-right:12px;
  letter-spacing:0.600px;
}

.ctx-arrow{
  margin-left:auto;
  margin-right:-1px;
}

.ctx-sep{
  height:11px;
  display:flex;
  align-items:center;
  padding:0 4px;
}

.ctx-sep i{
  display:block;
  width:100%;
  height:1px;
  background:#d8d8d8;
}

.sub{
  position:absolute;
  left:787px;
  top:651px;
  width:158px;
  height:239px;
  box-sizing:border-box;
  padding:1px 6px 0;
  background:#f9f9f9;
  border:1px solid #e8e8e8;
  border-radius:6px;
  box-shadow:0 2px 10px rgba(0,0,0,0.12);
  font-size:15px;
  color:#1f1f1f;
}

.sub-load{
  height:26px;
  border-radius:4px;
  background:#f0f0f0;
  display:flex;
  align-items:center;
  padding-left:39px;
}

.sub-sep{
  height:1px;
  background:#d8d8d8;
  margin:4px 0 6px;
}

.sub-row{
  height:28px;
  display:flex;
  align-items:center;
  padding-left:5px;
  gap:18px;
  margin-top:0;
}

.info{
  position:absolute;
  left:956px;
  top:890px;
  width:449px;
  height:90px;
  box-sizing:border-box;
  background:#fff;
  border:1px solid #1a9a35;
  border-left:9px solid #1a9a35;
  border-radius:3px;
}

.info-text{
  padding:6px 0 0 9px;
  font-size:15px;
  line-height:18px;
  color:#444;
}

.info-text p{
  margin:0;
  height:18px;
}

.v1{
  margin-left:0;
}

.v2{
  margin-left:6px;
}

.v3{
  margin-left:1px;
}

.info-text sup{
  font-size:9px;
  line-height:0;
}

.info-close{
  position:absolute;
  right:9px;
  top:6px;
  width:30px;
  height:30px;
  border-radius:50%;
  background:#eee;
  display:flex;
  align-items:center;
  justify-content:center;
}

.info-min{
  position:absolute;
  right:11px;
  top:66px;
  width:14px;
  height:14px;
  border-radius:50%;
  background:#eee;
}

.info-min::after{
  content:"";
  position:absolute;
  left:2px;
  right:2px;
  top:6px;
  height:1px;
  background:#aaa;
}
</style>

<style>
html,body{
  margin:0;
  overflow:hidden;
}
</style>
